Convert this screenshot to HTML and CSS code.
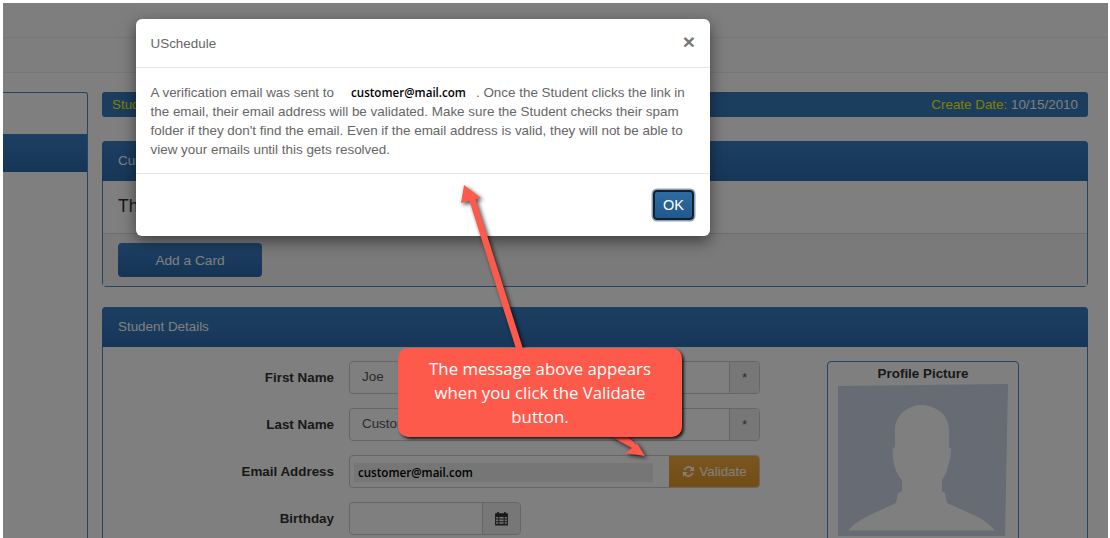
FILE: index.html
```html
<!DOCTYPE html>
<html lang="en">
<head>
    <meta charset="UTF-8">
    <meta name="viewport" content="width=device-width, initial-scale=1.0">
    <title>USchedule</title>
    <link rel="stylesheet" href="styles.css">
</head>
<body>
    <div class="page">
        <div class="top-bar"></div>
        <div class="top-bar"></div>

        <div class="layout">
            <div class="sidebar">
                <div class="side-active"></div>
            </div>

            <div class="main">
                <div class="title-bar">
                    <span class="hl">Student</span>
                    <span><span class="hl">Create Date:</span> 10/15/2010</span>
                </div>

                <div class="panel cards-panel">
                    <div class="panel-heading">Current Cards</div>
                    <div class="panel-body">There are no cards on file.</div>
                    <div class="panel-footer">
                        <button class="btn-blue">Add a Card</button>
                    </div>
                </div>

                <div class="panel details-panel">
                    <div class="panel-heading">Student Details</div>
                    <div class="details-body">
                        <div class="form">
                            <div class="form-row">
                                <label>First Name</label>
                                <div class="input-group">
                                    <div class="input">Joe</div>
                                    <div class="addon">*</div>
                                </div>
                            </div>
                            <div class="form-row">
                                <label>Last Name</label>
                                <div class="input-group">
                                    <div class="input">Customer</div>
                                    <div class="addon">*</div>
                                </div>
                            </div>
                            <div class="form-row">
                                <label>Email Address</label>
                                <div class="input-group">
                                    <div class="input email-input">
                                        <span class="email-fill">customer@mail.com</span>
                                    </div>
                                    <button class="btn-validate">
                                        <svg class="refresh" viewBox="0 0 16 16">
                                            <path d="M2.6 6.6A5.7 5.7 0 0 1 12.3 4L14 2.3V7.4H8.9L10.9 5.4A3.8 3.8 0 0 0 4.5 6.6Z"/>
                                            <path d="M13.4 9.4A5.7 5.7 0 0 1 3.7 12L2 13.7V8.6H7.1L5.1 10.6A3.8 3.8 0 0 0 11.5 9.4Z"/>
                                        </svg>
                                        Validate
                                    </button>
                                </div>
                            </div>
                            <div class="form-row">
                                <label>Birthday</label>
                                <div class="input-group birthday">
                                    <div class="input"></div>
                                    <div class="addon cal-addon">
                                        <svg class="cal" viewBox="0 0 14 14">
                                            <path d="M1 2.2H3V1H4.6V2.2H9.4V1H11V2.2H13V13.5H1ZM2 5.5V7H4V5.5ZM5 5.5V7H9V5.5ZM10 5.5V7H12V5.5ZM2 8V9.5H4V8ZM5 8V9.5H9V8ZM10 8V9.5H12V8ZM2 10.5V12H4V10.5ZM5 10.5V12H9V10.5ZM10 10.5V12H12V10.5Z"/>
                                        </svg>
                                    </div>
                                </div>
                            </div>
                        </div>

                        <div class="profile">
                            <div class="profile-title">Profile Picture</div>
                            <svg class="avatar" viewBox="838 384 170 152">
                                <polygon class="avatar-bg" points="838,386 1008,384 1005,536 838,536"/>
                                <path class="avatar-man" d="M921 405C912 405 895 412 895 430V447L892.5 448.5C893 456 893 461 894.5 466C896 472 899 477 902 480V491.5L898 493L896 503L870 515C860 520 852 525 848.5 530.5H995C990 525 984 520 977 516.5L947 503L945 492.5L942 491.5V480C945 476 947 471 948 466C950 460 951 455 951 448.5L949 447V430C949 412 932 405 921 405Z"/>
                            </svg>
                        </div>
                    </div>
                </div>
            </div>
        </div>

        <div class="backdrop"></div>

        <div class="modal">
            <div class="modal-header">
                <span>USchedule</span>
                <span class="modal-close">×</span>
            </div>
            <div class="modal-body">
                A verification email was sent to<span class="modal-email">customer@mail.com</span>. Once the Student clicks the link in the email, their email address will be validated. Make sure the Student checks their spam folder if they don't find the email. Even if the email address is valid, they will not be able to view your emails until this gets resolved.
            </div>
            <div class="modal-footer">
                <button class="btn-ok">OK</button>
            </div>
        </div>

        <svg class="arrows" viewBox="3 3 1105 535">
            <polygon points="464,185 481,198 475.5,199 524,352 517,352 469.5,201 461,203"/>
            <polygon points="645,456 625,453 632,448 610,436 622,432 637,445 635,440"/>
        </svg>

        <div class="callout">The message above appears<br>when you click the Validate<br>button.</div>
    </div>
</body>
</html>
```

FILE: styles.css
```css
* {
    margin: 0;
    padding: 0;
    box-sizing: border-box;
}

html, body {
    height: 100%;
    overflow: hidden;
    background: white;
}

body {
    font-family: "Liberation Sans", Arial, sans-serif;
    font-size: 13.4px;
    color: #333;
}

.page {
    position: relative;
    width: 1105px;
    height: 535px;
    margin: 3px 0 0 3px;
    background: #fefefe;
    overflow: hidden;
}

.top-bar {
    height: 35px;
    border-bottom: 1px solid #eee;
    background: #fdfdfd;
}

.layout {
    display: flex;
    gap: 14px;
    padding-top: 19px;
}

.sidebar {
    width: 85px;
    height: 500px;
    padding-top: 41px;
    border: 1px solid #4a86c8;
    border-left: 0;
    border-radius: 0 3px 0 0;
}

.side-active {
    height: 38px;
    background: linear-gradient(#3a80c4, #2c6cae);
}

.main {
    width: 986px;
}

.title-bar {
    display: flex;
    justify-content: space-between;
    align-items: center;
    height: 25px;
    padding: 0 10px;
    background: #367abc;
    border-radius: 3px;
    color: white;
}

.hl {
    color: #ffff00;
}

.panel {
    border: 1px solid #4a86c8;
    border-radius: 4px;
}

.cards-panel {
    margin-top: 24px;
}

.details-panel {
    margin-top: 20px;
    height: 300px;
}

.panel-heading {
    height: 40px;
    margin: -1px -1px 0;
    padding: 12px 16px;
    background: linear-gradient(#397ec2, #2e6eb4);
    border-radius: 4px 4px 0 0;
    color: white;
}

.panel-body {
    height: 52px;
    padding: 15px 15px;
    font-size: 17.5px;
}

.panel-footer {
    padding: 9px 15px;
    height: 53px;
    background: #f5f5f5;
    border-top: 1px solid #ddd;
}

.btn-blue {
    width: 144px;
    height: 34px;
    border: 0;
    border-radius: 4px;
    background: linear-gradient(#3b82c6, #2b68ac);
    color: white;
    font: 13.7px "Liberation Sans", Arial, sans-serif;
}

.details-body {
    display: flex;
    padding-top: 14px;
}

.form {
    width: 657px;
    display: flex;
    flex-direction: column;
    gap: 14px;
}

.form-row {
    display: grid;
    grid-template-columns: 231px 411px;
    gap: 15px;
    align-items: center;
}

.form-row label {
    text-align: right;
    font-weight: bold;
}

.input-group {
    display: flex;
    height: 33px;
    border: 1px solid #ccc;
    border-radius: 4px;
    background: white;
    overflow: hidden;
}

.birthday {
    width: 172px;
}

.input {
    flex: 1;
    padding: 7px 12px;
    color: #555;
}

.addon {
    width: 30px;
    border-left: 1px solid #ccc;
    background: #eee;
    color: #555;
    text-align: center;
    line-height: 32px;
}

.cal-addon {
    width: 38px;
    display: flex;
    align-items: center;
    justify-content: center;
}

.cal {
    width: 15px;
    height: 15px;
    fill: #333;
}

.email-input {
    padding: 7px 16px 0 4px;
}

.email-fill {
    display: block;
    height: 19px;
    padding-left: 4px;
    background: #ececec;
    color: black;
    font: 600 11.6px/19px "Open Sans", sans-serif;
}

.btn-validate {
    width: 90px;
    display: flex;
    align-items: center;
    justify-content: center;
    gap: 3px;
    border: 0;
    background: linear-gradient(#f5ac3c, #e8982a);
    color: white;
    font: 13.4px "Liberation Sans", Arial, sans-serif;
}

.refresh {
    width: 15px;
    height: 15px;
    fill: white;
}

.profile {
    width: 192px;
    height: 200px;
    margin-left: 67px;
    padding: 0 10px;
    border: 1px solid #4a86c8;
    border-radius: 4px;
}

.profile-title {
    height: 22px;
    text-align: center;
    font-weight: bold;
    line-height: 24px;
}

.avatar {
    display: block;
    width: 170px;
    height: 152px;
}

.avatar-bg {
    fill: #ccd6e8;
}

.avatar-man {
    fill: white;
}

.backdrop {
    position: absolute;
    inset: 0;
    background: rgba(0, 0, 0, 0.5);
}

.modal {
    position: absolute;
    left: 133px;
    top: 16px;
    width: 574px;
    height: 217px;
    background: white;
    border-radius: 6px;
    box-shadow: 0 5px 15px rgba(0, 0, 0, 0.5);
    color: #666;
    font-size: 13.43px;
}

.modal-header {
    display: flex;
    justify-content: space-between;
    align-items: center;
    height: 49px;
    padding: 0 15px 0 14.5px;
    border-bottom: 1px solid #e5e5e5;
}

.modal-close {
    margin-top: -3px;
    font-size: 21px;
    font-weight: bold;
    color: #777;
}

.modal-body {
    height: 106px;
    padding: 15px 15px 0 14.5px;
    line-height: 19px;
    border-bottom: 1px solid #e5e5e5;
}

.modal-email {
    padding: 0 10px 0 17px;
    color: black;
    font: 600 11.6px "Open Sans", sans-serif;
}

.modal-footer {
    display: flex;
    justify-content: flex-end;
    padding: 15px 15px 0;
}

.btn-ok {
    width: 41px;
    height: 30px;
    margin: 1px;
    border: 2px solid #16202c;
    border-radius: 4px;
    box-shadow: 0 0 0 1.5px #8aa0b8;
    background: linear-gradient(#2d6ca2, #22588c);
    color: white;
    font: 14.5px "Liberation Sans", Arial, sans-serif;
}

.arrows {
    position: absolute;
    inset: 0;
    width: 1105px;
    height: 535px;
    fill: #fe5a4c;
    filter: drop-shadow(2px 2px 2px rgba(0, 0, 0, 0.7));
}

.callout {
    position: absolute;
    left: 395px;
    top: 345px;
    width: 284px;
    height: 89px;
    padding-top: 9px;
    background: #fe5a4c;
    border-radius: 10px;
    box-shadow: 2px 2px 3px rgba(0, 0, 0, 0.8);
    color: white;
    text-align: center;
    font: 16.8px/24px "Open Sans", sans-serif;
}
```
